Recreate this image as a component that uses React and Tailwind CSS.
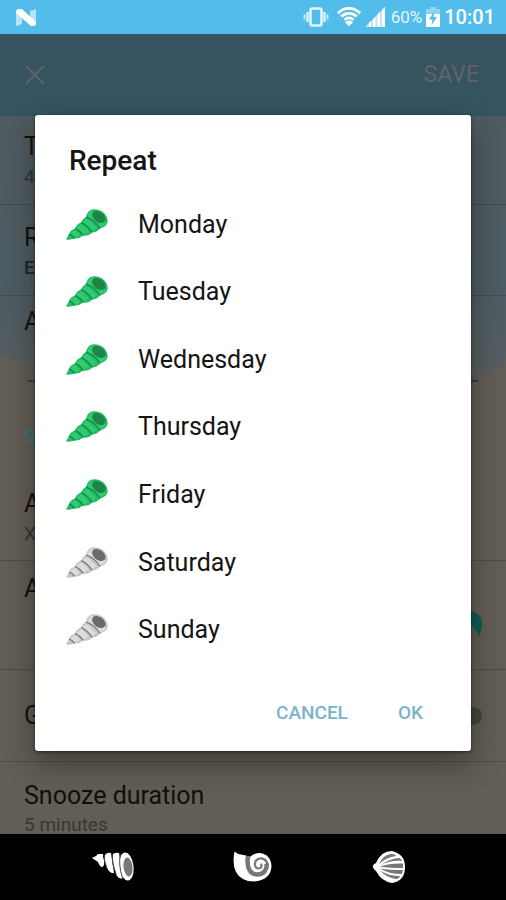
import { useState } from 'react';

const DAYS = ['Monday', 'Tuesday', 'Wednesday', 'Thursday', 'Friday', 'Saturday', 'Sunday'];

const GREEN = { light: '#2fcb72', base: '#23bb63', line: '#14803f', hole: '#1d8647' };
const GREY = { light: '#dcdcdc', base: '#c4c4c4', line: '#757575', hole: '#6b6b6b' };

function Shell({ checked }) {
  const c = checked ? GREEN : GREY;
  return (
    <svg viewBox="0 0 42 32" className="w-[42px] h-8 shrink-0" aria-hidden="true">
      <path
        d="M0 30.500 L3 25 Q4 21 9 19.500 Q10.500 15 15 13.500 Q16.500 9.500 20 8 Q21 2 26 .5 Q33 -.5 38.500 4.500 Q42.500 9 41.500 13.500 Q40 18 34 19.500 Q31 23.500 26 23.500 Q22.500 27.500 17 26.500 Q13.500 30 8.500 29.500 Q5 31 0 30.500Z"
        fill={c.base}
      />
      <path
        d="M4.500 24.500 Q6 22 9 21 L14 25.500 Q12.500 28 9.500 28Z M10.500 19.500 Q12 16.500 15.500 15 L22.500 22 Q21 25 17.500 25Z M16.500 13.500 Q18 11 21 10 L30 18.500 Q29 21.500 26 21.500Z M21.500 8 Q22 4 26 1.500 L40 14 Q38 18 33.500 18Z"
        fill={c.light}
      />
      <path
        d="M3 25 Q6.500 26 8.500 29.500 M9 19.500 Q14.500 22 17 26.500 M15 13.500 Q22 16.500 26 23.500 M20 8 Q29.500 11.500 34 19.500"
        fill="none"
        stroke={c.line}
        strokeWidth="1.300"
      />
      <ellipse cx="32.800" cy="8" rx="7.500" ry="5" transform="rotate(38 32.800 8)" fill={c.hole} />
    </svg>
  );
}

function StatusBar() {
  return (
    <header className="flex items-center h-[34px] pl-4 pr-[11px] bg-[#52bdea] text-white">
      <svg viewBox="0 0 20 17" className="w-5 h-[17px]" aria-label="Android N">
        <path d="M0 3 L6 5 V15 L0 17Z M14 2 L20 0 V14 L14 12Z" fill="#b5e3f7" />
        <path d="M0 3 Q0 0 3 0 H6 L20 13 V14 Q20 17 17 17 H15 L0 4Z" fill="#fff" />
      </svg>
      <div className="flex items-center ml-auto">
        <svg viewBox="0 0 26 20" className="w-[26px] h-5 mr-2" aria-label="Vibrate">
          <rect x="7.500" y="1.500" width="11" height="17" rx="1.500" fill="none" stroke="#e6f6fd" strokeWidth="2.500" />
          <path d="M4.500 5 V15 M21.500 5 V15" stroke="#d6f0fb" strokeWidth="2.500" />
          <path d="M1.500 7.500 V12.500 M24.500 7.500 V12.500" stroke="#c0e7f8" strokeWidth="2" />
        </svg>
        <svg viewBox="0 0 26 20" className="w-6 h-5 mr-1" aria-label="Wifi">
          <path d="M1 6 C8 -1 18 -1 25 6 M4.500 9.500 C9.500 5 16.500 5 21.500 9.500 M8 13 C11 10.500 15 10.500 18 13" fill="none" stroke="#fff" strokeWidth="2.900" />
          <path d="M13 20 L8.500 15.500 Q13 12 17.500 15.500Z" fill="#fff" />
        </svg>
        <svg viewBox="0 0 20 20" className="w-5 h-5 mr-1.5" aria-label="Signal">
          <path d="M20 0 V20 H0Z" fill="#bde6f8" />
          <path d="M4 16 L6 14 V20 H4Z M8 12 L10.500 9.500 V20 H8Z M12.500 7.500 L15 5 V20 H12.500Z M17 3 L20 0 V20 H17Z" fill="#fff" />
        </svg>
        <span className="text-[17px] leading-6 text-[#e4f5fd]">60%</span>
        <svg viewBox="0 0 14 20" className="w-3.5 h-5 mx-1" aria-label="Charging">
          <path d="M4 2 V0 H10 V2 H14 V7 H0 V2Z" fill="#8fd4f2" />
          <path d="M0 7 H14 V20 H0Z" fill="#fff" />
          <path d="M8.500 4 L3 12.500 H6.500 L5.500 18 L11 10 H7.500Z" fill="#52bdea" />
        </svg>
        <span className="text-xl leading-6 font-medium">10:01</span>
      </div>
    </header>
  );
}

function Background() {
  return (
    <main className="flex-1 relative overflow-hidden bg-[#4e5b61]">
      <svg
        viewBox="0 0 506 718"
        preserveAspectRatio="none"
        className="absolute inset-0 w-full h-full"
        aria-hidden="true"
      >
        <defs>
          <linearGradient id="sea" x1="0" y1="0" x2="0" y2="1">
            <stop offset="0" stopColor="#4f5b61" />
            <stop offset=".24" stopColor="#4d5c63" />
            <stop offset=".36" stopColor="#565e61" />
          </linearGradient>
        </defs>
        <rect width="506" height="718" fill="url(#sea)" />
        <path d="M0 238 C20 243 30 256 60 270 C150 290 360 290 440 275 Q480 264 506 246 V718 H0Z" fill="#625d55" />
      </svg>
      <div className="relative text-[25px] leading-[30px] text-[#10100e]">
        <section className="h-[89px] px-6 pt-4 border-b border-[#414b50]">
          <p>T</p>
          <p className="text-[19px] text-[#2c3336]">4</p>
        </section>
        <section className="h-[91px] px-6 pt-[18px] border-b border-[#414b50]">
          <p>R</p>
          <p className="text-[19px] font-medium text-[#1d2224]">E</p>
        </section>
        <section className="h-[104px] px-6 pt-[11px]">
          <p>A</p>
          <div className="mx-1 mt-[43px] border-b-2 border-[#3b3936]" />
        </section>
        <section className="h-[161px] px-6 pt-[22px] border-b border-[#504c46]">
          <h3 className="text-[19px] font-medium text-[#38748a]">S</h3>
          <p className="mt-[37px]">A</p>
          <p className="text-[19px] text-[#35322e]">X</p>
        </section>
        <section className="flex justify-between h-[109px] px-6 pt-[13px] border-b border-[#504c46]">
          <p>A</p>
          <svg viewBox="0 0 42 32" className="w-[42px] h-8 mt-9" aria-hidden="true">
            <path d="M0 30 L24 2 C34 -2 44 6 42 17 L39 27 C36 20 33 16 28 12Z" fill="#0d5a55" />
          </svg>
        </section>
        <section className="flex items-center justify-between h-[92px] px-6 border-b border-[#504c46]">
          <p>G</p>
          <span className="w-[22px] h-[18px] rounded-full bg-[#46433e]" />
        </section>
        <section className="px-6 pt-[19px]">
          <p>Snooze duration</p>
          <p className="mt-1 text-[19px] leading-5 text-[#393632]">5 minutes</p>
        </section>
      </div>
    </main>
  );
}

function NavBar() {
  return (
    <nav className="flex justify-center items-center gap-[82px] h-[66px] pr-1 shrink-0 bg-black">
      <button aria-label="Back" className="w-14 flex justify-center">
        <svg viewBox="0 0 42 30" className="w-[42px] h-[30px]">
          <g fill="#fff">
            <path d="M0 6 L4 4 L6 2 H11 V15 Q8 15 6 10Z" />
            <ellipse cx="9" cy="8.500" rx="3" ry="6.500" transform="rotate(-12 9 8.500)" />
            <path d="M13 3 Q15 0 19 1 L22 21 Q18 22 15 16 Q12 9 13 3Z" />
            <path d="M21 2 Q24 0 27 1 L31 26 Q27 28 24 22 Q20 10 21 2Z" />
            <ellipse cx="34.500" cy="14.500" rx="7" ry="14" transform="rotate(-7 34.500 14.500)" />
          </g>
          <ellipse cx="36" cy="15" rx="4.500" ry="9.500" transform="rotate(-7 36 15)" fill="#777" />
          <path d="M12 3 Q12 10 15 16 M20 2 Q20 13 24 22 M28.500 2 Q26 12 30.500 26" fill="none" stroke="#444" strokeWidth="1" />
        </svg>
      </button>
      <button aria-label="Home" className="w-14 flex justify-center">
        <svg viewBox="-4 0 44 32" className="w-11 h-8">
          <path
            d="M1.500 .5 Q4 3 8 3.500 Q13 4 17 6 Q21 2 27 2 Q38 3.500 38.500 15.500 Q37.500 29 21 30.500 Q8 30.500 3 21 Q-1 13 1.500 .5Z"
            fill="#fff"
          />
          <path d="M15 5 C13.500 15 16 23 24 23.500 C31 23.500 34.500 18 33.500 12.500" fill="none" stroke="#777" strokeWidth="4.500" />
          <path d="M34.500 14 C34 8.500 29 6 25 8 C20.500 10.500 21 17 25.500 17.500 C28.500 17.500 29.500 14.500 27.500 13" fill="none" stroke="#777" strokeWidth="2.200" />
        </svg>
      </button>
      <button aria-label="Recent apps" className="w-14 flex justify-center">
        <svg viewBox="0 0 34 34" className="w-[34px] h-[34px]">
          <path d="M1 17 Q0 15 4 13 Q9 1 20 1 Q33 4 33 17 Q33 31 20 33 Q9 31 4 21 Q1 19 1 17Z" fill="#fff" />
          <path
            d="M7 14 Q11 5 19 4 Q24 4 24 6 Q15 7 7 14Z M8 15.500 Q18 8 28 8 L30 11 Q18 10 8 15.500Z M8 16.500 Q18 13 31 13.500 V18 Q18 18 8 16.500Z M8 18.500 Q18 20 31 20 L30 24 Q17 24 8 18.500Z M8 20.500 Q17 26 28 26 Q27 29 24 29 Q15 28 8 20.500Z"
            fill="#777"
          />
        </svg>
      </button>
    </nav>
  );
}

export default function App() {
  const [selected, setSelected] = useState(DAYS.slice(0, 5));

  const toggle = (day) =>
    setSelected((prev) => (prev.includes(day) ? prev.filter((d) => d !== day) : [...prev, day]));

  return (
    <div className="relative flex flex-col h-screen font-[Roboto,sans-serif] overflow-hidden">
      <StatusBar />
      <div className="flex items-center justify-between h-[82px] pl-[25px] pr-[27px] bg-[#35545f] text-[#5f6567]">
        <button aria-label="Close">
          <svg viewBox="0 0 20 20" className="w-5 h-5">
            <path d="M1 1 L19 19 M19 1 L1 19" stroke="currentColor" strokeWidth="1.800" />
          </svg>
        </button>
        <button className="text-[23px] leading-7">SAVE</button>
      </div>
      <Background />
      <NavBar />

      <div
        role="dialog"
        aria-labelledby="repeat-title"
        className="absolute inset-x-[35px] top-[115px] rounded-[3px] bg-white text-[#151515] shadow-[0_12px_30px_rgba(20,22,10,0.45),0_1px_3px_rgba(0,0,0,0.6)]"
      >
        <h2 id="repeat-title" className="h-[76px] pl-[34px] pt-7 text-[28px] leading-9 font-medium">
          Repeat
        </h2>
        <div className="grid grid-rows-7 h-[473px]">
          {DAYS.map((day) => (
            <label key={day} className="flex items-center gap-[30px] pl-[31px] text-[25px] leading-[30px] cursor-pointer">
              <input
                type="checkbox"
                className="sr-only"
                checked={selected.includes(day)}
                onChange={() => toggle(day)}
              />
              <Shell checked={selected.includes(day)} />
              {day}
            </label>
          ))}
        </div>
        <div className="flex justify-end gap-[50px] pt-[37px] pb-[26px] pr-12 text-[19px] leading-6 font-medium text-[#7ab3cb]">
          <button>CANCEL</button>
          <button>OK</button>
        </div>
      </div>
    </div>
  );
}
